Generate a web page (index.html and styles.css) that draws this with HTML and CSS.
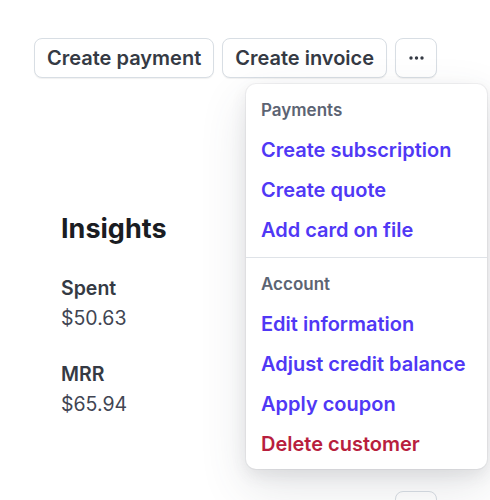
FILE: index.html
```html
<!DOCTYPE html>
<html lang="en">
<head>
    <meta charset="UTF-8">
    <meta name="viewport" content="width=device-width, initial-scale=1.0">
    <title>Customer actions</title>
    <link rel="stylesheet" href="styles.css">
</head>
<body>

    <div class="page">
        <!-- Top actions -->
        <div class="toolbar">
            <button class="btn">Create payment</button>
            <button class="btn">Create invoice</button>
            <button class="btn btn-icon" aria-label="More actions">
                <svg width="15" height="4" viewBox="0 0 15 4">
                    <circle cx="2" cy="2" r="1.7" fill="#353a44"/>
                    <circle cx="7.5" cy="2" r="1.7" fill="#353a44"/>
                    <circle cx="13" cy="2" r="1.7" fill="#353a44"/>
                </svg>
            </button>

            <!-- Dropdown menu (open) -->
            <div class="menu">
                <div class="menu-section">
                    <div class="menu-title">Payments</div>
                    <a class="menu-item" href="#">Create subscription</a>
                    <a class="menu-item" href="#">Create quote</a>
                    <a class="menu-item" href="#">Add card on file</a>
                </div>
                <div class="menu-section last">
                    <div class="menu-title">Account</div>
                    <a class="menu-item" href="#">Edit information</a>
                    <a class="menu-item" href="#">Adjust credit balance</a>
                    <a class="menu-item" href="#">Apply coupon</a>
                    <a class="menu-item danger" href="#">Delete customer</a>
                </div>
            </div>
        </div>

        <div class="insights">
            <h2>Insights</h2>
            <div class="stat">
                <div class="stat-label">Spent</div>
                <div class="stat-value">$50.63</div>
            </div>
            <div class="stat">
                <div class="stat-label">MRR</div>
                <div class="stat-value">$65.94</div>
            </div>
        </div>

        <div class="bottom-row">
            <button class="btn btn-icon"></button>
        </div>
    </div>

</body>
</html>
```

FILE: styles.css
```css
html, body {
    margin: 0;
    height: 100%;
    overflow: hidden;
}

body {
    font-family: Inter, "Noto Sans", sans-serif;
    background-color: #ffffff;
    color: #353a44;
}

.page {
    padding: 38px 0 0 34px;
}

.toolbar {
    position: relative;
    display: flex;
    gap: 8px;
}

.btn {
    height: 40px;
    padding: 0 12px;
    font-family: inherit;
    font-size: 20px;
    font-weight: 600;
    color: #353a44;
    background-color: #ffffff;
    border: 1px solid #d8dee4;
    border-radius: 8px;
    box-shadow: 0 1px 1px rgba(0, 0, 0, 0.06);
    cursor: pointer;
}

.btn-icon {
    width: 42px;
    padding: 0;
    display: flex;
    align-items: center;
    justify-content: center;
}

.menu {
    position: absolute;
    top: 46px;
    left: 212px;
    width: 241px;
    background-color: #ffffff;
    border-radius: 10px;
    box-shadow: 0 0 0 1px rgba(64, 68, 82, 0.06),
                0 6px 16px rgba(64, 68, 82, 0.10),
                0 18px 48px rgba(64, 68, 82, 0.14);
    z-index: 2;
}

.menu-section {
    padding: 14px 15px 7px;
    border-bottom: 1px solid #dfe3e8;
}

.menu-section.last {
    border-bottom: none;
    padding-bottom: 5px;
}

.menu-title {
    height: 24px;
    line-height: 24px;
    margin-bottom: 8px;
    font-size: 17px;
    font-weight: 600;
    color: #5c6473;
}

.menu-item {
    display: block;
    height: 40px;
    line-height: 40px;
    font-size: 20px;
    font-weight: 600;
    color: #5038f5;
    text-decoration: none;
    white-space: nowrap;
}

.menu-item.danger {
    color: #b81e3e;
}

.insights {
    padding: 133px 0 0 27px;
}

.insights h2 {
    margin: 0 0 26px;
    font-size: 27px;
    line-height: 36px;
    font-weight: 700;
    color: #1a1c22;
}

.stat {
    margin-bottom: 26px;
}

.stat-label {
    font-size: 19.5px;
    line-height: 30px;
    font-weight: 600;
    color: #353a44;
}

.stat-value {
    font-size: 19.5px;
    line-height: 30px;
    color: #414552;
}

.bottom-row {
    display: flex;
    padding-left: 361px;
    margin-top: 72px;
}
```
